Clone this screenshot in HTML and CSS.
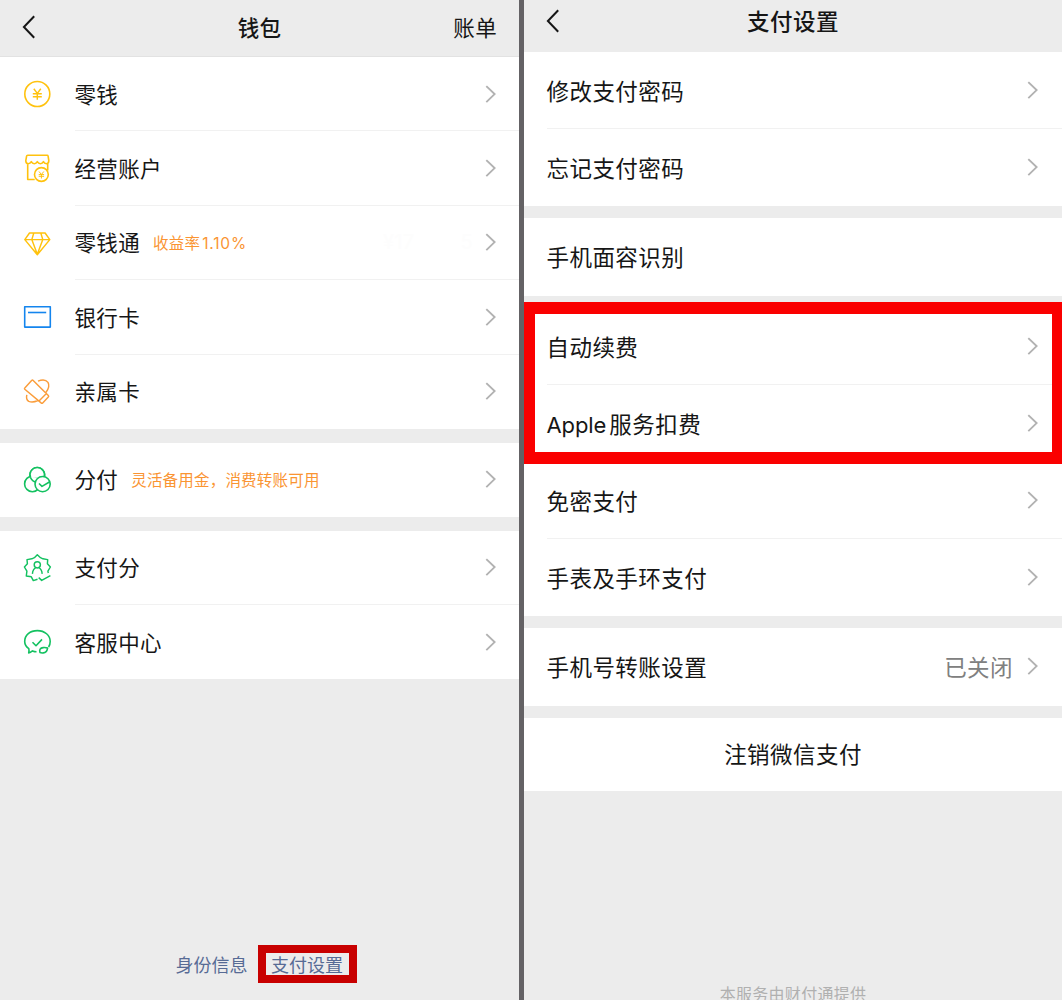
FILE: index.html
```html
<!DOCTYPE html>
<html lang="zh-CN">
<head>
<meta charset="utf-8">
<title>钱包</title>
<link rel="stylesheet" href="styles.css">
</head>
<body>
<svg class="defs" width="0" height="0">
  <symbol id="next" viewBox="0 0 12 20"><path d="M1.3 2.1 9.6 10.1 1.3 18.1"/></symbol>
  <symbol id="back" viewBox="0 0 14 24"><path d="M12.2 1.2 1.9 12 12.2 22.8"/></symbol>
</svg>
<div class="app">
  <main class="screen wallet">
    <header class="bar">
      <svg class="back"><use href="#back"/></svg>
      <h1>钱包</h1>
      <span class="action">账单</span>
    </header>
    <section class="group">
      <div class="row">
        <svg class="icon yellow" viewBox="0 0 30 30"><circle cx="15.3" cy="15" r="12.5"/><path class="thin" d="M11.8 9.8l3.5 4.6 3.5-4.6M10.8 14.8h9M10.8 17.8h9M15.3 14.4v6.4"/></svg>
        <div class="cell"><span>零钱</span><svg class="next"><use href="#next"/></svg></div>
      </div>
      <div class="row">
        <svg class="icon yellow" viewBox="0 0 30 30"><path d="M5.7 1.3h19.6q.6 0 .8.8l.7 4.6q0 2.8-2.3 3-2.2 0-3.1-2-1 2-3 2t-3.1-2q-1 2-3 2t-3-2q-1 2-3.2 2-2.3-.2-2.3-3l.8-4.6q.1-.8 1.1-.8zM5.7 9.5v16h7M25.7 9.5v7"/><circle cx="19.4" cy="20.5" r="6.9"/><path class="fine" d="M17 17.5l2.4 3 2.4-3M16.7 20.6h5.4M16.7 22.3h5.4M19.4 20.5v4"/></svg>
        <div class="cell"><span>经营账户</span><svg class="next"><use href="#next"/></svg></div>
      </div>
      <div class="row">
        <svg class="icon yellow" viewBox="0 0 30 30"><path class="thin" d="M7.5 5h15.6l4.7 6.6-12.5 15.2L2.8 11.6zM2.8 11.6h25M11.8 5l-2 6.6 5.5 14.6 5.5-14.6-2-6.6"/></svg>
        <div class="cell"><span>零钱通</span><small>收益率<span class="rate">1.10%</span></small><span class="balance"><i>¥17</i><i>5</i></span><svg class="next"><use href="#next"/></svg></div>
      </div>
      <div class="row">
        <svg class="icon blue" viewBox="0 0 30 30"><rect x="2.7" y="4.7" width="25.6" height="20.4"/><path d="M6 10.5h18.2"/></svg>
        <div class="cell"><span>银行卡</span><svg class="next"><use href="#next"/></svg></div>
      </div>
      <div class="row">
        <svg class="icon orange" viewBox="0 0 30 30"><path class="thin" d="M2.8 11.1 9.6 3.4q.8-.8 1.6 0L26.3 18.5q.8.8 0 1.6l-5.6 5.8q-.8.8-1.6 0L2.8 12.3q-.6-.6 0-1.2zM17 24l7.4-7.4M16 4.2q6.8-3 10 1.2 2.3 4.2-2 10M4.8 17.8q-1.1 4.8 2 6.6 4 1.6 9-.9"/></svg>
        <div class="cell"><span>亲属卡</span><svg class="next"><use href="#next"/></svg></div>
      </div>
    </section>
    <section class="group single">
      <div class="row">
        <svg class="icon green" viewBox="0 0 30 30"><circle class="fill" cx="15.3" cy="9.9" r="7.3"/><circle class="fill" cx="10.4" cy="18.9" r="7.8"/><path class="fill" d="M8.6 12.8A7.3 7.3 0 1 1 22 12.6"/><path class="cover" d="M9.8 13 21 12l-5 4z"/><path d="M8.6 12.8Q10.5 16.6 14.5 17.1"/><circle class="fill" cx="20.6" cy="19.1" r="7.6"/><path d="M17 18.5l3 2.9 7.4-4.4"/></svg>
        <div class="cell"><span>分付</span><small>灵活备用金，消费转账可用</small><svg class="next"><use href="#next"/></svg></div>
      </div>
    </section>
    <section class="group">
      <div class="row">
        <svg class="icon green" viewBox="0 0 30 30"><path class="thin" d="M15.5 26.2l-4.2 1.4-2-3.8-5-.8.6-4.8L2.4 14l3-3.2L5 6.6l4.8-.8 2.6-1.1 2.9-2.9 3.2 2.9 2.4 1.1 4.8.8-.3 4.2 3 3.2-2.5 4.2.4 1.8M16.7 24.6l3 2.8 8.7-4.8"/><circle class="thin" cx="15.3" cy="11.8" r="3.1"/><path class="thin" d="M10.4 20.8q.5-4.8 3.5-6.1M20.2 20.8q-.5-4.8-3.5-6.1"/></svg>
        <div class="cell"><span>支付分</span><svg class="next"><use href="#next"/></svg></div>
      </div>
      <div class="row">
        <svg class="icon green" viewBox="0 0 30 30"><path d="M14.5 24.7q-2 0-4-.8-2.2 1.9-3.8 2 .6-2.2.1-4.2Q2.7 18.7 2.7 14.5C2.7 8 8 3.6 15.4 3.6S28.2 8.4 28.2 14.5q0 3-1.6 5.5"/><path d="M10.5 15.2l3.5 3.5 6-6.3"/><path d="M18 25.6q-1.4-4.5 3.2-5 2.8-.2 4.4.5-.8 4.5-4.3 4.8-2.1.2-3.3-.3z"/></svg>
        <div class="cell"><span>客服中心</span><svg class="next"><use href="#next"/></svg></div>
      </div>
    </section>
    <footer class="links"><a>身份信息</a><a class="marked">支付设置</a></footer>
  </main>
  <main class="screen settings">
    <header class="bar">
      <svg class="back"><use href="#back"/></svg>
      <h1>支付设置</h1>
    </header>
    <section class="group">
      <div class="cell"><span>修改支付密码</span><svg class="next"><use href="#next"/></svg></div>
      <div class="cell"><span>忘记支付密码</span><svg class="next"><use href="#next"/></svg></div>
    </section>
    <section class="group">
      <div class="cell"><span>手机面容识别</span></div>
    </section>
    <section class="group highlighted">
      <div class="cell"><span>自动续费</span><svg class="next"><use href="#next"/></svg></div>
      <div class="cell"><span><span class="latin">Apple</span>服务扣费</span><svg class="next"><use href="#next"/></svg></div>
      <div class="cell"><span>免密支付</span><svg class="next"><use href="#next"/></svg></div>
      <div class="cell"><span>手表及手环支付</span><svg class="next"><use href="#next"/></svg></div>
      <div class="marker"></div>
    </section>
    <section class="group">
      <div class="cell"><span>手机号转账设置</span><span class="value">已关闭</span><svg class="next"><use href="#next"/></svg></div>
    </section>
    <section class="group cancel">注销微信支付</section>
    <footer class="provider">本服务由财付通提供</footer>
  </main>
</div>
</body>
</html>
```
FILE: styles.css
```css
* { box-sizing: border-box; }
body {
  margin: 0;
  font-family: Inter, "Noto Sans CJK SC", sans-serif;
  color: #161616;
}
.defs { display: block; height: 0; }
.app {
  display: grid;
  grid-template-columns: 519px 538px;
  column-gap: 5px;
  height: 1000px;
  overflow: hidden;
  background: #646265;
}
.screen {
  display: flex;
  flex-direction: column;
  height: 1000px;
  overflow: hidden;
  background: #ececec;
}
.bar {
  display: grid;
  grid-template-columns: 1fr auto 1fr;
  align-items: center;
  flex: none;
  padding: 0 22px;
}
.bar h1 { margin: 0; font-weight: 500; }
.back {
  width: 14px;
  height: 24px;
  fill: none;
  stroke: #161616;
  stroke-width: 2;
}
.action { justify-self: end; }
.group { flex: none; background: #fff; }
.cell {
  display: flex;
  align-items: center;
  flex: 1;
  height: 100%;
}
.next {
  width: 12px;
  height: 20px;
  margin-left: auto;
  fill: none;
  stroke: #b2b2b2;
  stroke-width: 1.9;
}

.wallet { font-size: 21.5px; letter-spacing: 0.35px; }
.wallet .cell > span, .wallet .cell > small { padding-bottom: 1px; }
.wallet .bar { height: 57px; padding-bottom: 2px; border-bottom: 1px solid #e2e2e2; }
.wallet h1, .action { padding-bottom: 2px; font-size: 21.5px; }
.wallet .group { margin-bottom: 14px; }
.row { display: flex; align-items: center; height: 74.4px; }
.single .row { height: 74px; }
.wallet .group:nth-of-type(3) { margin-top: -0.4px; }
.icon {
  width: 30px;
  height: 30px;
  margin: 0 22.5px 0 22px;
  flex: none;
  fill: none;
  stroke: currentColor;
  stroke-width: 1.6;
  stroke-linejoin: round;
}
.icon .thin { stroke-width: 1.45; }
.icon .fine { stroke-width: 1; }
.icon .fill { fill: #fff; }
.icon .cover { fill: #fff; stroke: none; }
.yellow { color: #ffc20e; }
.blue { color: #1485ee; }
.orange { color: #fa9d3b; }
.green { color: #13c160; }
.row .cell { padding-right: 22px; border-bottom: 1px solid #f1f1f1; }
.row:last-child .cell { border-bottom-color: transparent; }
.wallet small {
  margin-left: 13px;
  font-size: 15.5px;
  letter-spacing: 0.2px;
  color: #fa9432;
}
.rate { margin-left: 2px; letter-spacing: 0.8px; }
.balance {
  display: flex;
  justify-content: space-between;
  width: 90px;
  margin-left: auto;
  font-size: 20px;
  color: #fdfdfd;
}
.balance i { font-style: normal; }
.balance + .next { margin-left: 12px; }
.links {
  display: flex;
  justify-content: center;
  align-items: center;
  gap: 10px;
  height: 38px;
  margin: auto 0 17px;
  padding-left: 13px;
  font-size: 18px;
  letter-spacing: 0;
  color: #576b95;
}
.links a { padding-bottom: 1px; }
.marked {
  display: flex;
  align-items: center;
  justify-content: center;
  width: 99px;
  height: 38px;
  border: 8px solid #c80000;
}

.settings { font-size: 22.5px; letter-spacing: 0.45px; }
.settings .bar { height: 52px; padding-bottom: 11px; }
.settings h1 { padding-bottom: 1px; font-size: 22.5px; }
.settings .group { margin-bottom: 12px; }
.settings .cell {
  height: 77.2px;
  margin-left: 22.5px;
  padding-right: 23px;
  border-bottom: 1px solid #f1f1f1;
}
.settings .cell:only-child,
.settings .cell:nth-child(2):last-child,
.settings .cell:nth-child(4) { border-bottom-color: transparent; }
.highlighted { position: relative; }
.marker {
  position: absolute;
  top: -6px;
  left: -1px;
  width: 539px;
  height: 162px;
  border: 12px solid #fa0000;
  border-right-width: 10px;
}
.latin { margin-right: 3px; font-size: 22px; letter-spacing: -0.1px; }
.value { margin-left: auto; color: #808080; }
.value + .next { margin-left: 14px; }
.settings .cancel {
  display: flex;
  align-items: center;
  justify-content: center;
  height: 73px;
  padding-bottom: 2px;
}
.provider {
  margin: auto 0 -6px;
  text-align: center;
  font-size: 16px;
  line-height: 24px;
  letter-spacing: 0.3px;
  color: #b0b0b0;
}
```
